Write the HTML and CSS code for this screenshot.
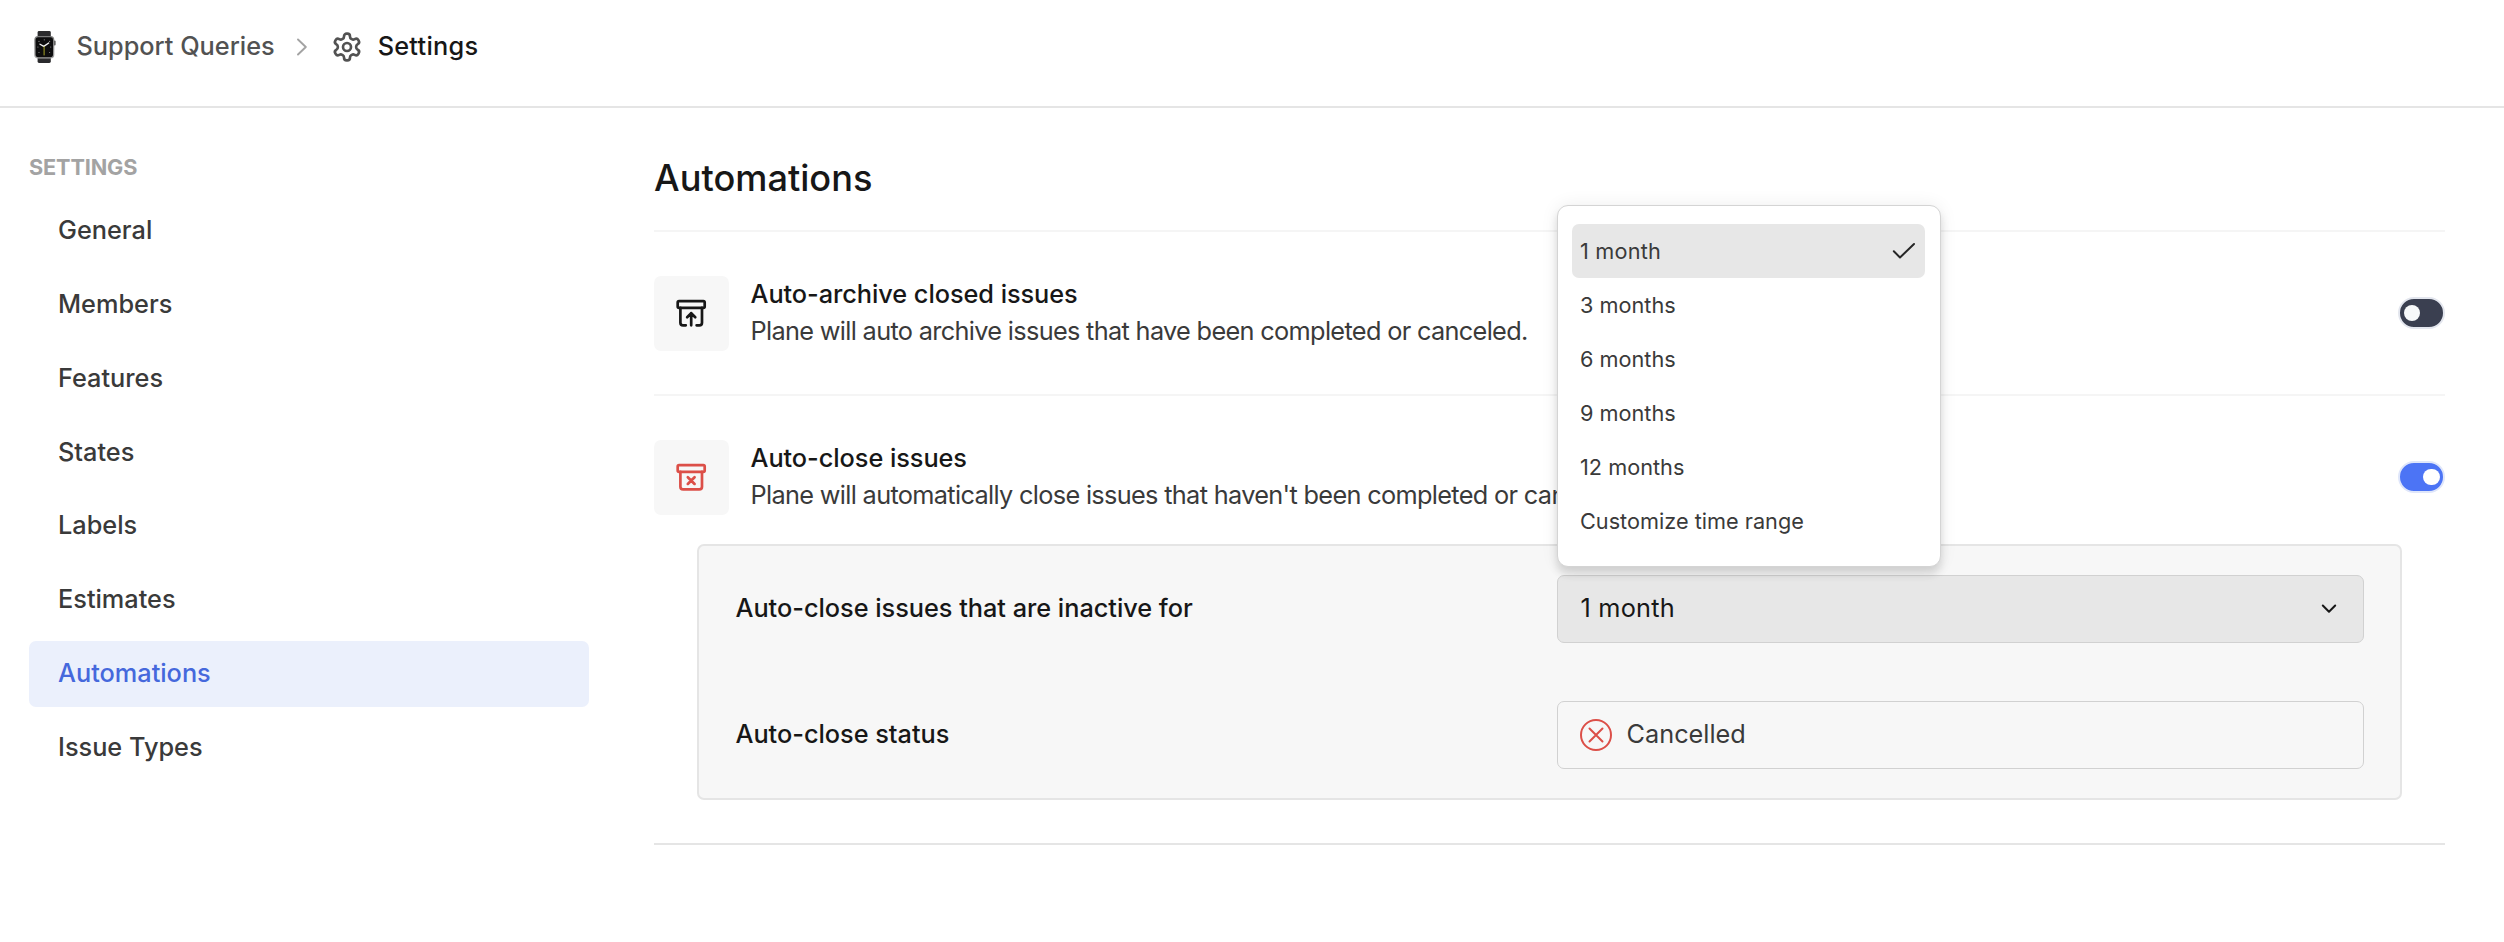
FILE: index.html
```html
<!DOCTYPE html>
<html lang="en">
<head>
<meta charset="utf-8">
<title>Settings</title>
<link rel="stylesheet" href="styles.css">
</head>
<body>
<header class="topbar">
  <svg class="watch" viewBox="0 0 22 32">
    <defs>
      <linearGradient id="case" x1="0" y1="0" x2="0" y2="1">
        <stop offset="0" stop-color="#7b7b7b"/><stop offset="1" stop-color="#a2a2a2"/>
      </linearGradient>
    </defs>
    <path d="M3.6 6V1.4Q3.6 0 5 0H15.400Q16.800 0 16.800 1.400V6Z" fill="#2b2b2d"/>
    <path d="M3.600 26V30.600Q3.600 32 5 32H15.400Q16.800 32 16.800 30.600V26Z" fill="#2b2b2d"/>
    <rect x="19.600" y="9.500" width="2" height="5" rx="1" fill="#555"/>
    <rect x="0.300" y="5" width="20" height="22.500" rx="3.800" fill="url(#case)"/>
    <rect x="1.600" y="6.300" width="17.400" height="19.900" rx="2.600" fill="#0d0d0e"/>
    <g fill="#8d8d8d"><circle cx="5" cy="10.400" r=".6"/><circle cx="10.300" cy="8.800" r=".6"/><circle cx="15.600" cy="10.400" r=".6"/><circle cx="3.900" cy="16" r=".6"/><circle cx="16.700" cy="16" r=".6"/><circle cx="5" cy="21.500" r=".6"/><circle cx="15.600" cy="21.500" r=".6"/></g>
    <path d="M6 13.200L9.800 15.400L14.700 12" fill="none" stroke="#f4f4f4" stroke-width="1.300" stroke-linecap="round" stroke-linejoin="round"/>
    <path d="M10.100 15.600V24" stroke="#b9b52b" stroke-width=".9"/>
  </svg>
  <span class="crumb crumb-parent">Support Queries</span>
  <svg class="sep" viewBox="0 0 10 18"><path d="M1 1.500L8.800 9L1 16.500"/></svg>
  <svg class="gear" viewBox="0 0 24 24"><path d="M12.220 2h-.44a2 2 0 0 0-2 2v.18a2 2 0 0 1-1 1.730l-.43.25a2 2 0 0 1-2 0l-.15-.08a2 2 0 0 0-2.730.73l-.22.38a2 2 0 0 0 .73 2.730l.15.1a2 2 0 0 1 1 1.720v.51a2 2 0 0 1-1 1.740l-.15.09a2 2 0 0 0-.73 2.730l.22.38a2 2 0 0 0 2.730.73l.15-.08a2 2 0 0 1 2 0l.43.25a2 2 0 0 1 1 1.730V20a2 2 0 0 0 2 2h.44a2 2 0 0 0 2-2v-.18a2 2 0 0 1 1-1.730l.43-.25a2 2 0 0 1 2 0l.15.08a2 2 0 0 0 2.730-.73l.22-.39a2 2 0 0 0-.73-2.730l-.15-.08a2 2 0 0 1-1-1.740v-.5a2 2 0 0 1 1-1.740l.15-.09a2 2 0 0 0 .73-2.730l-.22-.38a2 2 0 0 0-2.730-.73l-.15.08a2 2 0 0 1-2 0l-.43-.25a2 2 0 0 1-1-1.730V4a2 2 0 0 0-2-2z"/><circle cx="12" cy="12" r="3"/></svg>
  <span class="crumb crumb-current">Settings</span>
</header>

<div class="layout">
  <nav class="sidebar">
    <div class="sidebar-title">SETTINGS</div>
    <div class="sidebar-list">
      <a class="nav-item">General</a>
      <a class="nav-item">Members</a>
      <a class="nav-item">Features</a>
      <a class="nav-item">States</a>
      <a class="nav-item">Labels</a>
      <a class="nav-item">Estimates</a>
      <a class="nav-item nav-item-active">Automations</a>
      <a class="nav-item">Issue Types</a>
    </div>
  </nav>

  <main class="content">
    <h1 class="page-title">Automations</h1>

    <section class="rule">
      <div class="icon-box">
        <svg class="icon" viewBox="0 0 24 24"><rect x="2" y="3" width="20" height="5" rx="1"/><path d="M4 8v11a2 2 0 0 0 2 2h2M20 8v11a2 2 0 0 1-2 2h-2M9 15l3-3 3 3M12 12v9"/></svg>
      </div>
      <div class="rule-text">
        <div class="rule-title">Auto-archive closed issues</div>
        <div class="rule-desc">Plane will auto archive issues that have been completed or canceled.</div>
      </div>
      <div class="toggle"><span class="knob"></span></div>
    </section>

    <section class="rule rule-open">
      <div class="icon-box">
        <svg class="icon icon-red" viewBox="0 0 24 24"><rect x="2" y="3" width="20" height="5" rx="1"/><path d="M4 8v11a2 2 0 0 0 2 2h12a2 2 0 0 0 2-2V8M9.500 17l5-5M9.500 12l5 5"/></svg>
      </div>
      <div class="rule-text">
        <div class="rule-title">Auto-close issues</div>
        <div class="rule-desc">Plane will automatically close issues that haven't been completed or canceled.</div>
      </div>
      <div class="toggle toggle-on"><span class="knob"></span></div>
    </section>

    <div class="panel">
      <div class="field">
        <div class="field-label">Auto-close issues that are inactive for</div>
        <div class="select select-active">
          <span class="select-value one-month">1 month</span>
          <svg class="chevron" viewBox="0 0 16 10"><path d="M1.800 1.500L8 7.700L14.200 1.500"/></svg>
          <div class="menu">
            <div class="option option-selected"><span class="one-month">1 month</span>
              <svg class="check" viewBox="0 0 24 18"><path d="M1.800 9.200L8 15.500L22 2"/></svg>
            </div>
            <div class="option">3 months</div>
            <div class="option">6 months</div>
            <div class="option">9 months</div>
            <div class="option">12 months</div>
            <div class="option">Customize time range</div>
          </div>
        </div>
      </div>
      <div class="field">
        <div class="field-label">Auto-close status</div>
        <div class="select">
          <svg class="cancel" viewBox="0 0 32 32"><circle cx="16" cy="16" r="15"/><path d="M9.500 9.500L22.500 22.500M22.500 9.500L9.500 22.500"/></svg>
          <span class="status-value">Cancelled</span>
        </div>
      </div>
    </div>
  </main>
</div>
</body>
</html>
```
FILE: styles.css
```css
* { box-sizing: border-box; }

body {
  margin: 0;
  height: 942px;
  overflow: hidden;
  background: #fff;
  color: #171717;
  font-family: Inter, "Liberation Sans", sans-serif;
  font-size: 25.3px;
  font-weight: 400;
  line-height: 36px;
}

svg { display: block; flex: none; fill: none; stroke-linecap: round; stroke-linejoin: round; }

/* Header */
.topbar {
  display: flex;
  align-items: center;
  height: 108px;
  padding: 0 34px 14px;
  border-bottom: 2px solid #e5e5e5;
}
.watch { width: 22px; height: 32px; margin-top: 2px; }
.crumb { font-weight: 500; white-space: nowrap; }
.crumb-parent { margin-left: 20.500px; color: #525252; }
.sep { width: 10px; height: 18px; margin: 2px 0 0 22.500px; stroke: #a3a3a3; stroke-width: 1.9; }
.gear { width: 32px; height: 32px; margin: 2px 0 0 24px; stroke: #525252; stroke-width: 2; }
.crumb-current { margin-left: 14.500px; letter-spacing: .25px; }

.layout { display: flex; }

/* Sidebar */
.sidebar { width: 560px; margin-left: 29px; padding-top: 41px; }
.sidebar-title { font-size: 21.7px; font-weight: 700; letter-spacing: -.15px; color: #a3a3a3; }
.sidebar-list { display: flex; flex-direction: column; gap: 7.8px; margin-top: 13.2px; }
.nav-item {
  height: 66px;
  padding: 14px 29px 16px;
  border-radius: 7px;
  font-weight: 500;
  color: #3a3a3a;
}
.nav-item-active { background: #ebf0fc; color: #4568dc; }

/* Content */
.content { width: 1791px; margin-left: 65px; padding-top: 46px; }
.page-title {
  height: 78px;
  margin: 0;
  border-bottom: 2px solid #f5f5f5;
  font-size: 36.2px;
  font-weight: 500;
  line-height: 48px;
}
.rule { display: flex; align-items: flex-start; height: 164px; padding-top: 44px; border-bottom: 2px solid #f5f5f5; }
.rule-open { height: 148px; border-bottom: 0; }
.icon-box { display: flex; align-items: center; justify-content: center; width: 75px; height: 75px; border-radius: 7px; background: #f7f7f7; }
.icon { width: 32.400px; height: 32.400px; stroke: #171717; stroke-width: 2; }
.icon-red { stroke: #dc4f48; }
.rule-text { flex: 1; margin: -1px 0 0 21.500px; }
.rule-title { font-weight: 500; line-height: 37px; letter-spacing: -.05px; }
.rule-desc { color: #3a3a3a; line-height: 37px; letter-spacing: -.0265em; }

.toggle {
  display: flex;
  align-items: center;
  width: 47px;
  height: 32px;
  margin-top: 21px;
  padding: 0 3.5px;
  border: 2px solid #e3e6ee;
  border-radius: 16px;
  background: #3a3f50;
}
.toggle-on { justify-content: flex-end; background: #4c74f5; border-color: #dfe6fa; }
.knob { width: 16.600px; height: 16.600px; border-radius: 50%; background: #f7f9fa; }
.toggle-on .knob { background: #fff; }

/* Auto-close configuration */
.panel {
  display: flex;
  flex-direction: column;
  gap: 58px;
  height: 256px;
  margin: 0 43px 0 43px;
  padding: 29px 36px 0 36.500px;
  border: 2px solid #e5e5e5;
  border-radius: 7px;
  background: #f7f7f7;
}
.content::after { content: ""; display: block; margin-top: 43px; border-top: 2px solid #e5e5e5; }
.field { display: flex; align-items: center; justify-content: space-between; }
.field-label { margin-top: -2px; font-weight: 500; letter-spacing: -.02px; }
.select {
  position: relative;
  display: flex;
  align-items: center;
  width: 807px;
  height: 68px;
  padding: 0 26px 0 21.500px;
  border: 1px solid #d1d1d1;
  border-radius: 7px;
}
.select-active { justify-content: space-between; background: #e7e7e7; }
.select-value { margin: -2px 0 0 1px; }
.one-month { letter-spacing: .2px; }
.chevron { width: 16px; height: 10px; stroke: #171717; stroke-width: 2; }
.cancel { width: 32px; height: 32px; stroke: #dc4f48; stroke-width: 2; }
.status-value { margin: -2px 0 0 15px; color: #3a3a3a; }

/* Dropdown menu */
.menu {
  position: absolute;
  left: -1px;
  bottom: 75px;
  z-index: 1;
  width: 384px;
  height: 362px;
  padding: 18px 15px 0 14px;
  border: 1px solid #d4d4d4;
  border-radius: 11px;
  background: #fff;
  box-shadow: 0 7px 9px rgba(0, 0, 0, .13), 0 0 18px rgba(0, 0, 0, .07);
}
.option {
  display: flex;
  align-items: center;
  justify-content: space-between;
  height: 54px;
  padding: 0 9px 0 8px;
  border-radius: 7px;
  font-size: 21.7px;
  color: #3a3a3a;
}
.option-selected { background: #e7e7e7; }
.check { width: 24px; height: 18px; stroke: #262626; stroke-width: 2; }
```
